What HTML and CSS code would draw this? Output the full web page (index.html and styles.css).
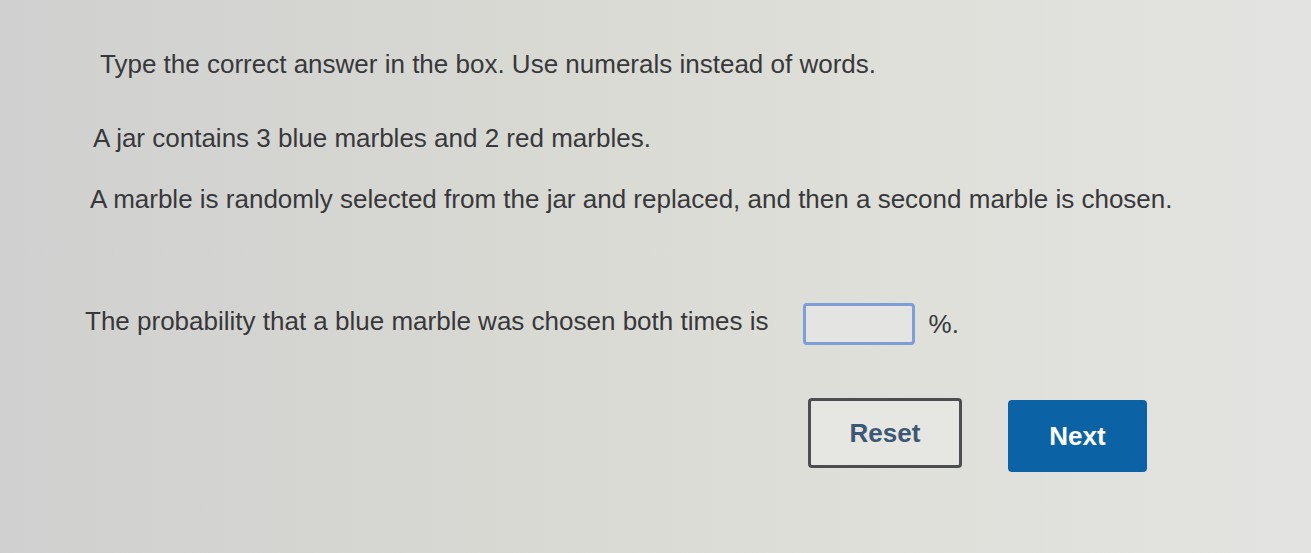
FILE: index.html
```html
<!DOCTYPE html>
<html lang="en">
<head>
  <meta charset="UTF-8">
  <meta name="viewport" content="width=device-width, initial-scale=1.0">
  <title>Probability Question</title>
  <link rel="stylesheet" href="styles.css">
</head>
<body>

  <!-- Question -->
  <div class="question">
    <p class="instructions">Type the correct answer in the box. Use numerals instead of words.</p>
    <p class="line-jar">A jar contains 3 blue marbles and 2 red marbles.</p>
    <p class="line-draw">A marble is randomly selected from the jar and replaced, and then a second marble is chosen.</p>
    <p class="answer-line">
      <span class="prompt">The probability that a blue marble was chosen both times is</span>
      <input class="answer-box" type="text" aria-label="answer">
      <span class="unit">%.</span>
    </p>
  </div>

  <!-- Actions -->
  <div class="actions">
    <button class="button reset">Reset</button>
    <button class="button next">Next</button>
  </div>

</body>
</html>
```

FILE: styles.css
```css
body {
  font-family: "Liberation Sans", Arial, sans-serif;
  margin: 0;
  padding: 0;
  height: 553px;
  overflow: hidden;
  color: #38383b;
  background: linear-gradient(90deg, #d0d0d0 0%, #d8d9d3 40%, #dfe0da 70%, #e3e3e1 100%);
}

.question {
  padding: 49px 0 0 92px;
}

.question p {
  margin: 0;
  font-size: 26px;
  line-height: 30px;
}

.instructions {
  padding-left: 8px;
}

.question .line-jar {
  margin-top: 44px;
  padding-left: 1px;
}

.question .line-draw {
  margin-top: 31px;
  margin-left: -2px;
}

.question .answer-line {
  margin-top: 89px;
  margin-left: -7px;
  display: flex;
  align-items: center;
}

.prompt {
  padding-bottom: 6px;
}

.answer-box {
  width: 112px;
  height: 42px;
  margin: 0 14px 0 34px;
  border: 3px solid #7e9fd6;
  border-radius: 4px;
  background: #e4e5e2;
  box-sizing: border-box;
}

.unit {
  font-size: 26px;
}

.actions {
  display: flex;
  align-items: flex-start;
  gap: 46px;
  padding: 53px 0 0 808px;
}

.button {
  font-family: "Liberation Sans", Arial, sans-serif;
  font-size: 26px;
  font-weight: bold;
  border-radius: 4px;
  cursor: pointer;
}

.reset {
  width: 154px;
  height: 70px;
  color: #3d5874;
  background: #e6e6e3;
  border: 3px solid #4c4d50;
}

.next {
  width: 139px;
  height: 72px;
  margin-top: 2px;
  color: #ffffff;
  background: #0b63a6;
  border: none;
}
```
